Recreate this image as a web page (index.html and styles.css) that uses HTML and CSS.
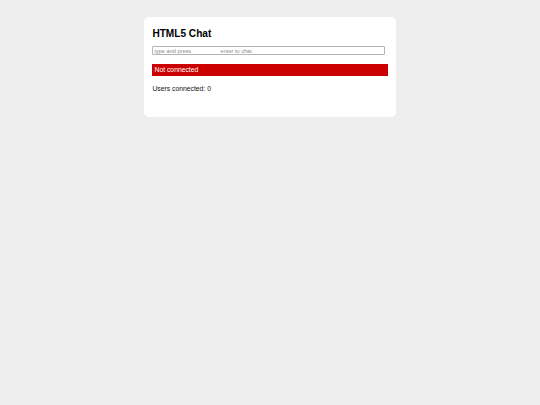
FILE: index.html
```html
<!DOCTYPE html>
<html>
<head>
<meta charset="utf-8">
<title>HTML5 Chat</title>
<link rel="stylesheet" href="styles.css">
</head>
<body>
<div class="card">
  <h1 class="title">HTML5 Chat</h1>
  <input class="chat-input" type="text" placeholder="type and press&#160;&#160;&#160;&#160;&#160;&#160;&#160;&#160;&#160;&#160;&#160;&#160;&#160;&#160;&#160;&#160;&#160;&#160;&#160;enter to chat">
  <div class="status">Not connected</div>
  <p class="users">Users connected: 0</p>
  <div class="log"></div>
</div>
</body>
</html>
```
FILE: styles.css
```css
html, body {
  margin: 0;
  padding: 0;
  background: #eeeeee;
  font-family: "Liberation Sans", Arial, sans-serif;
}
body {
  padding-top: 17px;
}
.card {
  box-sizing: border-box;
  width: 252px;
  margin: 0 auto;
  padding: 10.9px 8.4px 8.4px;
  background: #ffffff;
  border-radius: 5px;
  display: flex;
  flex-direction: column;
  align-items: flex-start;
}
.title {
  margin: 0;
  font-size: 10.1px;
  font-weight: bold;
  color: #000;
}
.chat-input {
  box-sizing: border-box;
  margin: 7px 0 0;
  width: 232.7px;
  height: 9.6px;
  padding: 0 1px;
  border: 1px solid #b4b4b4;
  border-radius: 1px;
  font-family: "Liberation Sans", Arial, sans-serif;
  font-size: 5.6px;
  outline: none;
}
.chat-input::placeholder {
  color: #8a8a8a;
}
.status {
  box-sizing: border-box;
  align-self: stretch;
  margin-top: 8.6px;
  height: 12.3px;
  padding: 2.4px 2.1px;
  background: #cc0000;
  color: #ffffff;
  font-size: 6.8px;
}
.users {
  margin: 9px 0 0;
  font-size: 6.8px;
  color: #111;
}
.log {
  height: 16.5px;
}
```
